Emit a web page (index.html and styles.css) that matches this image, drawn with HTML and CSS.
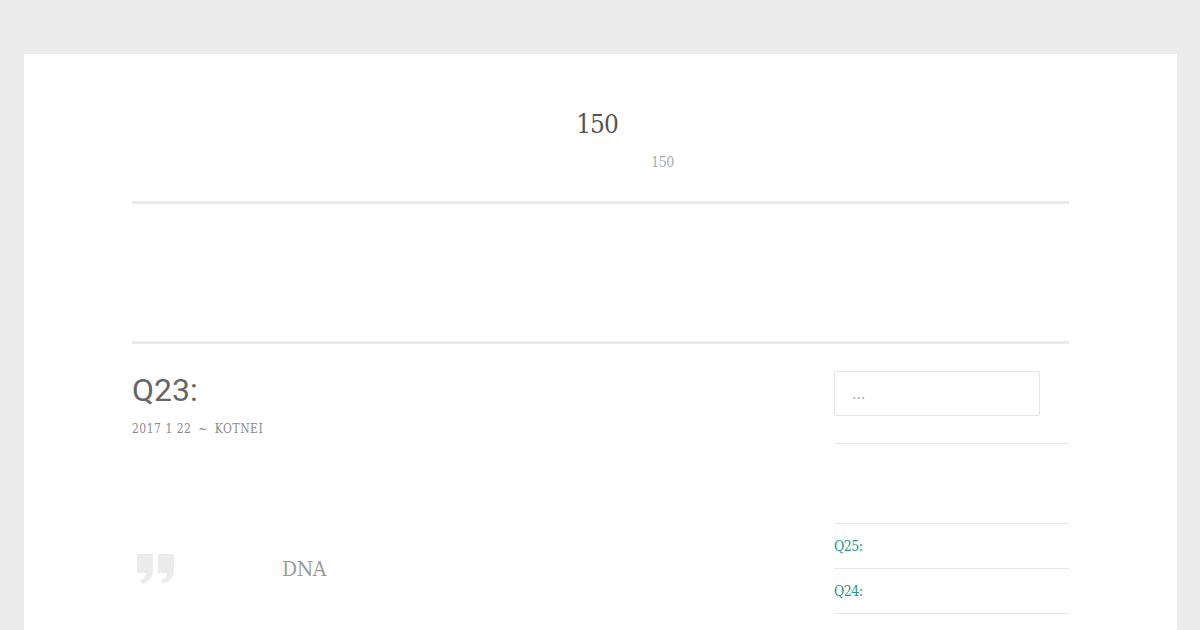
FILE: index.html
```html
<!DOCTYPE html>
<html lang="en">
<head>
  <meta charset="UTF-8">
  <meta name="viewport" content="width=device-width, initial-scale=1.0">
  <title>150</title>
  <link rel="stylesheet" href="styles.css">
</head>
<body>

<div class="site">
  <header class="site-header">
    <h1 class="site-title">150</h1>
    <p class="site-description">150</p>
  </header>

  <nav class="main-nav"></nav>

  <div class="content-area">
    <main class="main-column">
      <article class="post">
        <h2 class="post-title">Q23:</h2>
        <div class="post-meta">2017 1 22 <span class="sep">~</span> KOTNEI</div>

        <blockquote class="post-quote">
          <svg class="quote-icon" width="38" height="30" viewBox="0 0 38 30">
            <path d="M0 0h16v16c0 7-4 12-11 14l-2-4c4-1 6-4 6-7H0z" fill="#ebebeb"/>
            <path d="M21 0h16v16c0 7-4 12-11 14l-2-4c4-1 6-4 6-7h-9z" fill="#ebebeb"/>
          </svg>
          <p>DNA</p>
        </blockquote>
      </article>
    </main>

    <aside class="sidebar">
      <div class="widget search-widget">
        <input type="search" class="search-field" placeholder="...">
      </div>

      <div class="widget recent-posts">
        <ul>
          <li><a href="#">Q25:</a></li>
          <li><a href="#">Q24:</a></li>
          <li><a href="#">Q22:</a></li>
        </ul>
      </div>
    </aside>
  </div>
</div>

</body>
</html>
```

FILE: styles.css
```css
body {
  font-family: 'DejaVu Serif', serif;
  background-color: #ececec;
  margin: 0;
  padding: 0;
}

.site {
  background-color: #fff;
  margin: 54px 23px 0 24px;
  padding: 0 108px;
  min-height: 600px;
}

.site-header {
  text-align: center;
  padding: 50px 0 28px;
  border-bottom: 3px solid #ebebeb;
}

.site-title {
  font-size: 26px;
  font-weight: normal;
  font-stretch: condensed;
  letter-spacing: -1px;
  line-height: 40px;
  color: #555;
  margin: 0;
  padding-right: 7px;
}

.site-description {
  font-size: 14px;
  font-stretch: condensed;
  letter-spacing: -0.5px;
  line-height: 22px;
  color: #aaa;
  margin: 7px 0 0;
  padding-left: 124px;
}

.main-nav {
  height: 137px;
  border-bottom: 3px solid #ebebeb;
}

.content-area {
  display: grid;
  grid-template-columns: 1fr 235px;
  column-gap: 62px;
}

.post-title {
  font-family: 'Roboto', sans-serif;
  font-size: 32px;
  font-weight: 400;
  line-height: 44px;
  color: #666;
  margin: 24px 0 0;
}

.post-meta {
  font-size: 12px;
  font-stretch: condensed;
  letter-spacing: 0.5px;
  line-height: 20px;
  color: #8a8a8a;
  margin-top: 7px;
}

.post-meta .sep {
  margin: 0 3px;
}

.post-quote {
  display: flex;
  align-items: center;
  margin: 115px 0 0;
  padding-left: 5px;
}

.quote-icon {
  flex: none;
}

.post-quote p {
  font-size: 21px;
  font-stretch: condensed;
  font-weight: 300;
  letter-spacing: -0.5px;
  color: #9a9a9a;
  margin: 0 0 0 107px;
}

.sidebar {
  padding-top: 27px;
}

.search-widget {
  padding-bottom: 27px;
  border-bottom: 1px solid #e8e8e8;
}

.search-field {
  box-sizing: border-box;
  width: 206px;
  height: 45px;
  border: 1px solid #e6e6e6;
  border-radius: 2px;
  padding: 0 17px;
  font-family: 'DejaVu Serif', serif;
  font-size: 14px;
  color: #999;
  outline: none;
}

.search-field::placeholder {
  color: #aaa;
}

.recent-posts {
  margin-top: 79px;
}

.recent-posts ul {
  list-style: none;
  margin: 0;
  padding: 0;
}

.recent-posts li {
  border-top: 1px solid #e8e8e8;
  height: 44px;
  display: flex;
  align-items: center;
}

.recent-posts a {
  font-size: 14px;
  font-stretch: condensed;
  letter-spacing: -0.5px;
  color: #2b9488;
  text-decoration: none;
}
```
